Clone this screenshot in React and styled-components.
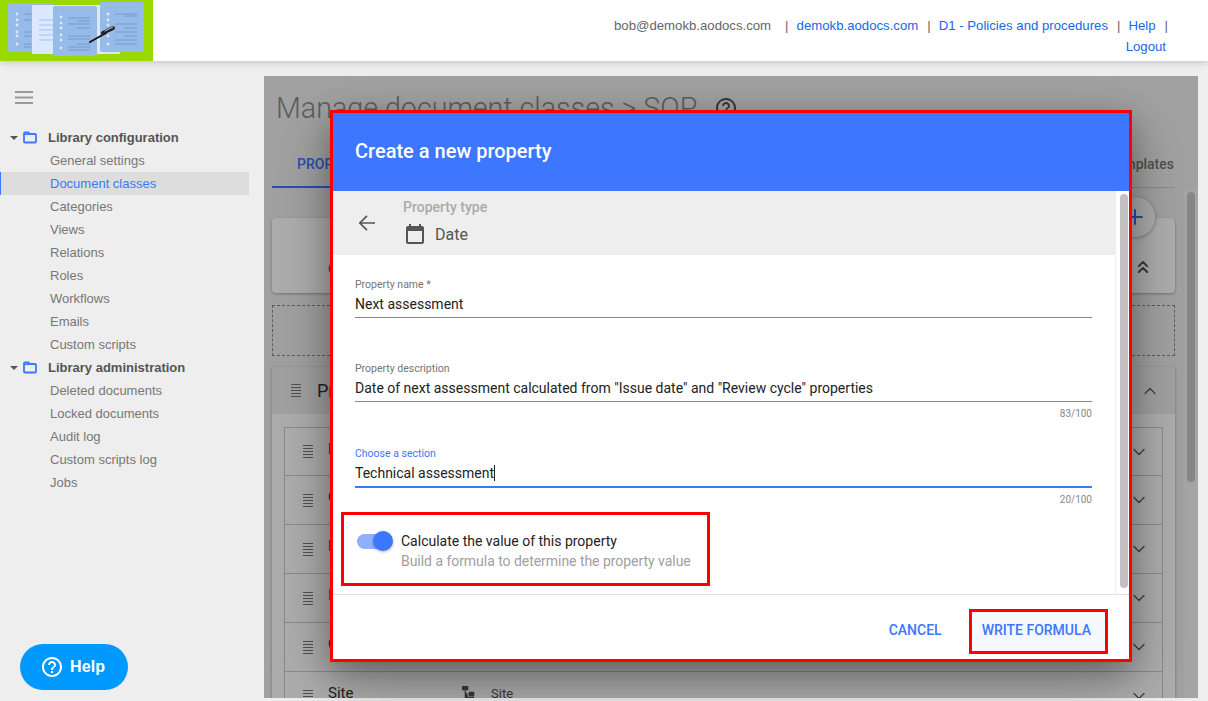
import React from "react";
import styled, { createGlobalStyle } from "styled-components";
import { ChevronDown, ChevronUp, ChevronsUp, Plus } from "lucide-react";

const Global = createGlobalStyle`
  html, body { margin: 0; padding: 0; height: 100%; overflow: hidden; background: #eee; }
  * { box-sizing: border-box; }
  #root { height: 100%; }
`;

const Page = styled.div`
  width: 1208px; height: 701px; display: flex; flex-direction: column; position: relative;
  font-family: "Liberation Sans", Arial, sans-serif; background: #eee; overflow: hidden;
`;
const Header = styled.header`
  height: 61px; flex: none; background: #fff; display: flex; justify-content: space-between;
  box-shadow: 0 2px 6px rgba(0,0,0,.16); position: relative; z-index: 1;
`;
const Logo = styled.svg`width: 153px; height: 61px; display: block;`;
const TopLinks = styled.div`
  width: 640px; padding: 15px 32px 0 0; text-align: right; font-size: 13.2px; line-height: 21px; color: #666; white-space: nowrap;
`;
const TopLink = styled.a`color: #1a66e8; text-decoration: none; margin-right: ${p => p.$last ? "10px" : "0"};`;
const Sep = styled.span`margin: 0 8px 0 ${p => p.$wide ? "14px" : "9px"}; color: #666;`;
const Body = styled.div`flex: 1; display: flex; min-height: 0;`;
const Sidebar = styled.aside`width: 264px; flex: none; padding-top: 24px; color: #777; display: flex; flex-direction: column;`;
const Burger = styled.div`height: 24px; padding-left: 15px; margin-bottom: 17px; display: flex; align-items: center;`;
const GroupRow = styled.div`
  height: 23px; display: flex; align-items: center; font-size: 13px; font-weight: 700; color: #555; padding-left: 10px;
`;
const Caret = styled.span`
  width: 0; height: 0; border-left: 4px solid transparent; border-right: 4px solid transparent; border-top: 4px solid #555; margin-right: 5px;
`;
const Folder = styled.svg`width: 14px; height: 13px; margin-right: 11px;`;
const NavItem = styled.div`
  width: 249px; height: 23px; display: flex; align-items: center; font-size: 13px; padding-left: ${p => p.$active ? "49px" : "50px"};
  color: ${p => p.$active ? "#3d76ff" : "#777"}; background: ${p => p.$active ? "#ddd" : "transparent"};
  border-left: ${p => p.$active ? "1px solid #3d76ff" : "0"};
`;
const HelpButton = styled.button`
  position: absolute; left: 20px; top: 644px; width: 108px; height: 46px; border: 0; border-radius: 23px; background: #0099ff;
  color: #fff; font: 700 16px "Liberation Sans", Arial, sans-serif; display: flex; align-items: center; gap: 6px; padding: 0 0 0 20px; letter-spacing: .1px;
`;
const Main = styled.main`
  width: 934px; height: 622px; margin-top: 15px; position: relative; overflow: hidden; background: #eee; padding: 0 8px;
  font-family: Roboto, sans-serif;
`;
const Title = styled.h1`
  margin: 0; height: 64px; font-size: 28.65px; font-weight: 300; color: #8a8a8a; padding-left: 4px; display: flex; align-items: center; gap: 17px; white-space: nowrap;
`;
const Tabs = styled.div`
  width: 903px; height: 48px; display: flex; justify-content: space-between; align-items: center; border-bottom: 1px solid #ccc; font-size: 14px; font-weight: 500; color: #777;
`;
const ActiveTab = styled.div`
  color: #3d76ff; width: 90px; padding-left: 25px; height: 48px; line-height: 48px; border-bottom: 2px solid #3d76ff; white-space: nowrap;
`;
const TabRight = styled.div`padding-right: 1px;`;
const Scroller = styled.div`display: flex; gap: 11px; flex-direction: column; width: 903px; padding-top: 30px; position: relative;`;
const TopCard = styled.div`
  height: 75px; background: #fff; border-radius: 4px; box-shadow: 0 1px 3px rgba(0,0,0,.3); display: flex; align-items: flex-end; padding: 0 22px 16px 56px; color: #555;
  justify-content: space-between; font-size: 14px;
`;
const Fab = styled.div`
  position: absolute; left: 843px; top: 9px; width: 40px; height: 40px; border-radius: 50%; background: #fff; box-shadow: 0 1px 4px rgba(0,0,0,.3); color: #3d76ff;
  display: flex; align-items: center; justify-content: center;
`;
const DropZone = styled.div`height: 51px; border: 1px dashed #888; margin-top: 1px;`;
const Section = styled.section`background: #fff; box-shadow: 0 1px 3px rgba(0,0,0,.3); padding-bottom: 12px;`;
const SectionHead = styled.div`
  height: 47px; background: #eee; display: flex; align-items: center; padding: 0 15px 0 19px; font-size: 18px; color: #333; gap: 16px;
`;
const Spacer = styled.span`flex: 1;`;
const Grip = styled.svg`width: 10px; height: 13px; color: #777; flex: none;`;
const RowList = styled.div`margin: 13px 12px 0; border-top: 1px solid #ccc; border-left: 1px solid #ccc; border-right: 1px solid #ccc;`;
const Row = styled.div`
  height: 49px; border-bottom: 1px solid #ccc; display: flex; align-items: center; padding: 0 13px 0 18px; font-size: 15px; color: #333;
  &:first-child { height: 48px; }
`;
const RowName = styled.span`margin: 0 0 6px 15px; width: 134px;`;
const RowType = styled.span`flex: 1; display: flex; align-items: center; gap: 9px; font-size: 13px; color: #555; margin-bottom: 6px;`;
const MainTrack = styled.div`position: absolute; right: 0; top: 113px; width: 14px; bottom: 0; background: #f4f4f4;`;
const MainThumb = styled.div`margin: 3px 3px 0; height: 290px; width: 8px; border-radius: 4px; background: #c8c8c8;`;
const Scrim = styled.div`position: absolute; inset: 0; background: rgba(0,0,0,.32);`;
const Modal = styled.div`
  position: absolute; left: 330px; top: 110px; width: 802px; height: 552px; background: #fff; border: 3px solid #f00;
  box-shadow: 0 11px 30px rgba(0,0,0,.3), 0 24px 60px rgba(0,0,0,.2); display: flex; flex-direction: column; font-family: Roboto, sans-serif;
`;
const ModalHeader = styled.div`
  height: 78px; flex: none; background: #3d76ff; color: #fff; font-size: 20px; font-weight: 500; padding: 0 22px 2px; display: flex; align-items: center;
`;
const ModalBody = styled.div`flex: 1; display: flex; min-height: 0; border-bottom: 1px solid #e0e0e0;`;
const ModalContent = styled.div`flex: 1; min-width: 0; border-right: 1px solid #eee;`;
const ModalTrack = styled.div`width: 13px; flex: none; padding: 3px 1px 0 4px;`;
const ModalThumb = styled.div`height: 394px; border-radius: 4px; background: #c1c1c1;`;
const TypeBar = styled.div`height: 64px; background: #eee; display: flex; padding-left: 22px; color: #555;`;
const BackIcon = styled.svg`width: 24px; height: 24px; align-self: center; flex: none;`;
const TypeInfo = styled.div`margin-left: 24px; padding-top: 8px; display: flex; flex-direction: column; gap: 8px;`;
const TypeLabel = styled.div`font-size: 14px; line-height: 16px; font-weight: 500; color: #aaa;`;
const TypeValue = styled.div`display: flex; align-items: center; gap: 8px; font-size: 16px; height: 24px; color: #555;`;
const DateText = styled.span`margin-bottom: 2px;`;
const Field = styled.div`padding: 0 23px 0 22px; height: ${p => p.$h}px; display: flex; flex-direction: column; justify-content: flex-end;`;
const Label = styled.label`font-size: 10.5px; line-height: 12px; color: ${p => p.$active ? "#3d76ff" : "#757575"};`;
const Value = styled.div`
  font-size: 14px; line-height: 18px; color: #222; padding: 4px 0 0; height: ${p => p.$active ? "28px" : "27px"};
  border-bottom: ${p => p.$active ? "2px solid #3d76ff" : "1px solid #8a8a8a"}; white-space: nowrap;
`;
const Caretline = styled.span`border-right: 1px solid #222;`;
const Count = styled.div`height: 16px; padding: 6px 23px 0 0; text-align: right; font-size: 10px; line-height: 12px; color: #888;`;
const ToggleBox = styled.div`
  margin: 8px 0 0 8px; width: 369px; height: 74px; border: 3px solid #f00; display: flex; align-items: center; padding-left: 13px; gap: 8px;
`;
const SwitchWrap = styled.div`width: 36px; height: 20px; position: relative; margin-top: -16px; flex: none;`;
const SwitchTrack = styled.div`position: absolute; left: 0; top: 3px; width: 34px; height: 15px; border-radius: 8px; background: #8fb0ff;`;
const SwitchThumb = styled.div`position: absolute; right: 0; top: 0; width: 20px; height: 20px; border-radius: 50%; background: #3d76ff; box-shadow: 0 1px 3px rgba(0,0,0,.3);`;
const ToggleText = styled.div`font-size: 14px; line-height: 20px; color: #222; white-space: nowrap; margin-top: 4px;`;
const ToggleSub = styled.div`color: #a0a0a0; letter-spacing: -.04px;`;
const Footer = styled.div`height: 64px; flex: none; display: flex; justify-content: flex-end; align-items: flex-start; padding-right: 21px;`;
const TextBtn = styled.button`
  border: ${p => p.$marked ? "3px solid #f00" : "0"}; background: ${p => p.$marked ? "#f5f8ff" : "transparent"}; color: #3d76ff; font: 500 14px Roboto, sans-serif;
  height: ${p => p.$marked ? "45px" : "36px"}; padding: ${p => p.$marked ? "0 14px 3px 10px" : "0 14px"}; margin: ${p => p.$marked ? "14px 0 0 13px" : "17px 0 0"}; white-space: nowrap;
`;

const GripIcon = () => (
  <Grip viewBox="0 0 10 13"><path d="M0 .5h10M0 3.5h10M0 6.5h10M0 9.5h10M0 12.5h10" stroke="currentColor" strokeWidth="1" fill="none" /></Grip>
);
const FolderIcon = () => (
  <Folder viewBox="0 0 14 13"><path d="M1 2.5A1 1 0 0 1 2 1.5h3.5l1.3 1.5H12a1 1 0 0 1 1 1v6.5a1 1 0 0 1-1 1H2a1 1 0 0 1-1-1z" fill="none" stroke="#3d76ff" strokeWidth="1.8" /><path d="M1 2.5h5v1.5H1z" fill="#3d76ff" /></Folder>
);
const TreeIcon = () => (
  <svg width="20" height="14" viewBox="0 0 20 14"><path d="M0 0h6v4H0zM3 4v8h4M3 8h4M7 6h5v4H7zM7 11h5v3H7z" fill="#555" stroke="#555" strokeWidth=".6" /></svg>
);
const HelpOutline = ({ size, color }) => (
  <svg width={size} height={size} viewBox="0 0 24 24" fill={color}><path d="M11 18h2v-2h-2v2zm1-16C6.48 2 2 6.48 2 12s4.48 10 10 10 10-4.48 10-10S17.52 2 12 2zm0 18c-4.41 0-8-3.59-8-8s3.59-8 8-8 8 3.59 8 8-3.59 8-8 8zm0-14c-2.21 0-4 1.79-4 4h2c0-1.1.9-2 2-2s2 .9 2 2c0 2-3 1.75-3 5h2c0-2.25 3-2.5 3-5 0-2.21-1.79-4-4-4z" /></svg>
);

const configItems = ["General settings", "Document classes", "Categories", "Views", "Relations", "Roles", "Workflows", "Emails", "Custom scripts"];
const adminItems = ["Deleted documents", "Locked documents", "Audit log", "Custom scripts log", "Jobs"];
const rows = ["Document ID", "Owner", "Department", "Issue date", "Category"];

export default function App() {
  return (
    <Page>
      <Global />
      <Header>
        <Logo viewBox="0 0 153 61">
          <rect width="153" height="61" fill="#99d900" />
          <g style={{ filter: "blur(.35px)" }}>
            <rect x="8" y="3" width="45" height="49" rx="2" fill="#96bbe9" />
            <rect x="32" y="5" width="88" height="49" rx="1" fill="#dce8ff" />
            <path d="M39 20h14M39 25h14M39 30h14M39 35h14M39 40h14" stroke="#9cc2f5" strokeWidth="1" />
            <rect x="53" y="6" width="44" height="50" rx="2" fill="#96bbe9" />
            <rect x="100" y="2" width="44" height="50" rx="2" fill="#96bbe9" />
            <g fill="#dce8ff">
              <circle cx="17" cy="14" r="1.4" /><circle cx="17" cy="20" r="1.4" /><circle cx="17" cy="25" r="1.4" /><circle cx="17" cy="32" r="1.4" /><circle cx="17" cy="36" r="1.4" /><circle cx="17" cy="44" r="1.4" />
              <circle cx="61" cy="17" r="1.4" /><circle cx="61" cy="23" r="1.4" /><circle cx="61" cy="28" r="1.4" /><circle cx="61" cy="35" r="1.4" /><circle cx="61" cy="40" r="1.4" /><circle cx="61" cy="48" r="1.4" />
              <circle cx="108" cy="14" r="1.4" /><circle cx="108" cy="20" r="1.4" /><circle cx="108" cy="25" r="1.4" /><circle cx="108" cy="32" r="1.4" /><circle cx="108" cy="36" r="1.4" /><circle cx="108" cy="44" r="1.4" />
            </g>
            <path d="M24 14h7M24 20h7M24 32h7M24 36h7M24 44h7M24 47h7M68 18h22M77 21h13M68 24h22M77 28h13M68 36h22M68 39h22M77 44h13M68 47h22M68 50h22M115 14h22M124 16h13M115 24h22M124 28h13M115 32h22M124 36h13M115 40h22M115 44h22" stroke="#7396c8" strokeWidth=".9" />
            <path d="M90 42l16-9" stroke="#111" strokeWidth="2" strokeLinecap="round" />
            <path d="M103 33l10-5" stroke="#222" strokeWidth="4" strokeLinecap="round" />
            <path d="M105 31l8-4" stroke="#bcd" strokeWidth="1" strokeLinecap="round" />
          </g>
        </Logo>
        <TopLinks>
          bob@demokb.aodocs.com<Sep $wide>|</Sep>
          <TopLink>demokb.aodocs.com</TopLink><Sep>|</Sep>
          <TopLink>D1 - Policies and procedures</TopLink><Sep>|</Sep>
          <TopLink>Help</TopLink><Sep>|</Sep><br />
          <TopLink $last>Logout</TopLink>
        </TopLinks>
      </Header>
      <Body>
        <Sidebar>
          <Burger>
            <svg width="18" height="13" viewBox="0 0 18 13"><path d="M0 1h18M0 6.5h18M0 12h18" stroke="#999" strokeWidth="1.8" /></svg>
          </Burger>
          <GroupRow><Caret /><FolderIcon />Library configuration</GroupRow>
          {configItems.map(i => <NavItem key={i} $active={i === "Document classes"}>{i}</NavItem>)}
          <GroupRow><Caret /><FolderIcon />Library administration</GroupRow>
          {adminItems.map(i => <NavItem key={i}>{i}</NavItem>)}
        </Sidebar>
        <Main>
          <Title>Manage document classes &gt; SOP<HelpOutline size={24} color="#555" /></Title>
          <Tabs>
            <ActiveTab>PROPERTIES</ActiveTab>
            <TabRight>Templates</TabRight>
          </Tabs>
          <Scroller>
            <TopCard><span>Collapse</span><ChevronsUp size={20} strokeWidth={2.4} /></TopCard>
            <DropZone />
            <Section>
              <SectionHead><GripIcon />Properties<Spacer /><ChevronUp size={20} strokeWidth={1.7} color="#666" /></SectionHead>
              <RowList>
                {rows.map(r => (
                  <Row key={r}><GripIcon /><RowName>{r}</RowName><RowType /><ChevronDown size={20} strokeWidth={1.7} color="#666" /></Row>
                ))}
                <Row><GripIcon /><RowName>Site</RowName><RowType><TreeIcon />Site</RowType><ChevronDown size={20} strokeWidth={1.7} color="#666" /></Row>
              </RowList>
            </Section>
            <Fab><Plus size={24} /></Fab>
          </Scroller>
          <MainTrack><MainThumb /></MainTrack>
          <Scrim />
        </Main>
      </Body>
      <HelpButton>
        <HelpOutline size={24} color="#fff" />
        Help
      </HelpButton>
      <Modal>
        <ModalHeader>Create a new property</ModalHeader>
        <ModalBody>
          <ModalContent>
            <TypeBar>
              <BackIcon viewBox="0 0 24 24"><path d="M20 12H5M12 4.8L4.8 12L12 19.2" fill="none" stroke="#555" strokeWidth="1.7" /></BackIcon>
              <TypeInfo>
                <TypeLabel>Property type</TypeLabel>
                <TypeValue>
                  <svg width="24" height="24" viewBox="0 0 24 24" fill="#555"><path d="M19 3h-1V1h-2v2H8V1H6v2H5c-1.11 0-1.99.9-1.99 2L3 19c0 1.1.89 2 2 2h14c1.1 0 2-.9 2-2V5c0-1.1-.9-2-2-2zm0 16H5V8h14v11z" /></svg>
                  <DateText>Date</DateText>
                </TypeValue>
              </TypeInfo>
            </TypeBar>
            <Field $h={63}><Label>Property name *</Label><Value>Next assessment</Value></Field>
            <Field $h={84}><Label>Property description</Label><Value>Date of next assessment calculated from "Issue date" and "Review cycle" properties</Value></Field>
            <Count>83/100</Count>
            <Field $h={70}><Label $active>Choose a section</Label><Value $active><Caretline>Technical assessment</Caretline></Value></Field>
            <Count>20/100</Count>
            <ToggleBox>
              <SwitchWrap><SwitchTrack /><SwitchThumb /></SwitchWrap>
              <ToggleText>Calculate the value of this property<ToggleSub>Build a formula to determine the property value</ToggleSub></ToggleText>
            </ToggleBox>
          </ModalContent>
          <ModalTrack><ModalThumb /></ModalTrack>
        </ModalBody>
        <Footer>
          <TextBtn>CANCEL</TextBtn>
          <TextBtn $marked>WRITE FORMULA</TextBtn>
        </Footer>
      </Modal>
    </Page>
  );
}
